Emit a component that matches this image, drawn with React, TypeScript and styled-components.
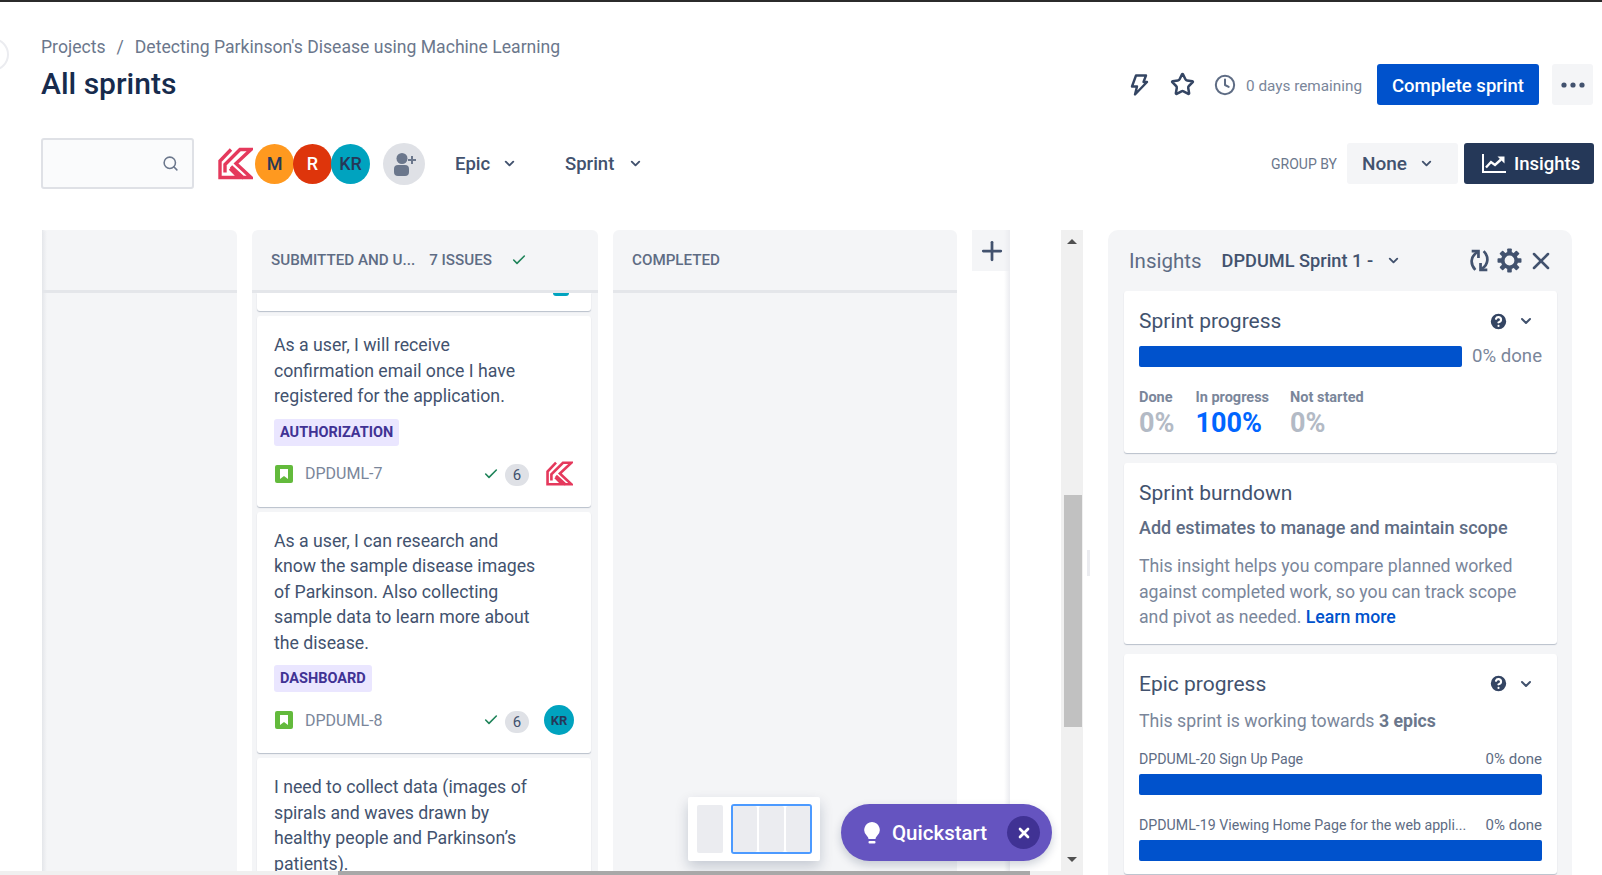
import React from 'react';
import styled, { createGlobalStyle } from 'styled-components';
import { Check, ChevronDown, CircleHelp, Clock, Plus, Search, Star, X } from 'lucide-react';

const GlobalStyle = createGlobalStyle`
  html, body { margin: 0; padding: 0; background: #fff; }
  body { font-family: Roboto, "Noto Sans", sans-serif; color: #172b4d; }
  * { box-sizing: border-box; }
  svg { flex: none; }
`;

function KLogo({ size }: { size: number }) {
  return (
    <svg width={size} height={size} viewBox="0 0 35 32" fill="none" stroke="#e5395c" strokeWidth="3.400">
      <path d="M13 2L2 13.500V30h19l-9-9" />
      <path d="M7 25v-8L22 2h11L18 16l15 14h-8L13 19" />
    </svg>
  );
}

function StoryIcon() {
  return (
    <svg width="18" height="18" viewBox="0 0 18 18">
      <rect width="18" height="18" rx="2" fill="#63ba3c" />
      <path d="M5 4h8v10l-4-3-4 3z" fill="#fff" />
    </svg>
  );
}

function BoltIcon() {
  return (
    <svg width="24" height="24" viewBox="0 0 24 24" fill="none" stroke="#344563" strokeWidth="2.400" strokeLinejoin="round">
      <path d="M9 2.500h10l-2.500 6.500H20L8 21.500l2-8H5z" />
    </svg>
  );
}

function SyncIcon() {
  return (
    <svg width="25" height="25" viewBox="0 0 24 24" fill="none" stroke="#42526e" strokeWidth="2.600">
      <path d="M10 4C3 8 3 16 8 21" />
      <path d="M4.500 3H11v6.500" />
      <path d="M14 20c7-4 7-12 2-17" />
      <path d="M19.500 21H13v-6.500" />
    </svg>
  );
}

function GearIcon() {
  const teeth = [0, 45, 90, 135, 180, 225, 270, 315];
  return (
    <svg width="25" height="25" viewBox="0 0 24 24" fill="#42526e">
      <circle cx="12" cy="12" r="6.500" fill="none" stroke="#42526e" strokeWidth="3.600" />
      {teeth.map(a => (
        <rect key={a} x="9.800" y="0.500" width="4.400" height="5" rx="0.800" transform={`rotate(${a} 12 12)`} />
      ))}
    </svg>
  );
}

function ChartIcon() {
  return (
    <svg width="26" height="22" viewBox="0 0 26 22" fill="none" stroke="#fff" strokeWidth="2">
      <path d="M2 1v18h23" />
      <path d="M5 14.500l5-5.500 4 3 6-5.500" strokeWidth="2.400" />
      <path d="M16.500 3.500h7v7z" fill="#fff" stroke="none" />
    </svg>
  );
}

function DotsIcon() {
  return (
    <svg width="24" height="6" viewBox="0 0 24 6" fill="#42526e">
      <circle cx="3" cy="3" r="2.600" />
      <circle cx="12" cy="3" r="2.600" />
      <circle cx="21" cy="3" r="2.600" />
    </svg>
  );
}

function BulbIcon() {
  return (
    <svg width="18" height="24" viewBox="0 0 18 24" fill="#fff">
      <path d="M9 1a8 8 0 0 0-5 14c1 1 1.500 2 1.500 3h7c0-1 .5-2 1.500-3A8 8 0 0 0 9 1z" />
      <rect x="5.500" y="20" width="7" height="2.500" rx="1" />
    </svg>
  );
}

function PersonAddIcon() {
  return (
    <svg width="26" height="26" viewBox="0 0 26 26" fill="#6b778c">
      <circle cx="11" cy="7.500" r="5.500" />
      <rect x="3" y="14" width="15" height="11" rx="4" />
      <path d="M20 5h2v3h3v2h-3v3h-2v-3h-3V8h3z" />
    </svg>
  );
}

function HelpChevron() {
  return (
    <HelpRow>
      <CircleHelp size={21} color="#fff" fill="#344563" strokeWidth={2.4} />
      <ChevronDown size={16} color="#42526e" strokeWidth={3} />
    </HelpRow>
  );
}

export default function App() {
  return (
    <Page>
      <GlobalStyle />
      <CollapseKnob />
      <Header>
        <HeaderLeft>
          <Crumbs>Projects<CrumbSep>/</CrumbSep>Detecting Parkinson's Disease using Machine Learning</Crumbs>
          <Title>All sprints</Title>
        </HeaderLeft>
        <HeaderRight>
          <BoltIcon />
          <Star size={25} color="#344563" strokeWidth={2.4} />
          <Clock size={22} color="#5e6c84" strokeWidth={2.2} />
          <Remaining>0 days remaining</Remaining>
          <PrimaryButton>Complete sprint</PrimaryButton>
          <MoreButton><DotsIcon /></MoreButton>
        </HeaderRight>
      </Header>

      <Toolbar>
        <SearchBox><Search size={17} color="#6b778c" strokeWidth={2.2} /></SearchBox>
        <Avatars>
          <LogoSlot><KLogo size={35} /></LogoSlot>
          <Avatar $bg="#ff991f" $fg="#253858">M</Avatar>
          <Avatar $bg="#de350b" $fg="#fff">R</Avatar>
          <Avatar $bg="#00a3bf" $fg="#253858">KR</Avatar>
        </Avatars>
        <AddPerson><PersonAddIcon /></AddPerson>
        <FilterButton $width={110} $gap={12}>Epic<ChevronDown size={15} strokeWidth={3} /></FilterButton>
        <FilterButton $width={100} $gap={14}>Sprint<ChevronDown size={15} strokeWidth={3} /></FilterButton>
        <ToolbarSpacer />
        <GroupLabel>GROUP BY</GroupLabel>
        <NoneButton>None<ChevronDown size={15} strokeWidth={3} /></NoneButton>
        <InsightsButton><ChartIcon />Insights</InsightsButton>
      </Toolbar>

      <Body>
        <Board>
          <Column $width={195}>
            <ColumnHeader />
          </Column>
          <Column $width={346}>
            <ColumnHeader>
              <HeaderName>SUBMITTED AND U...</HeaderName>
              <HeaderCount>7 ISSUES</HeaderCount>
              <Check size={16} color="#1f845a" strokeWidth={2.4} />
            </ColumnHeader>
            <CardList>
              <StubCard><StubDot /></StubCard>
              <Card>
                <CardText>As a user, I will receive confirmation email once I have registered for the application.</CardText>
                <Tag>AUTHORIZATION</Tag>
                <CardFooter>
                  <StoryIcon />
                  <IssueKey>DPDUML-7</IssueKey>
                  <Check size={16} color="#1f845a" strokeWidth={2.4} />
                  <Points>6</Points>
                  <CardAssignee><KLogo size={27} /></CardAssignee>
                </CardFooter>
              </Card>
              <Card>
                <CardText>As a user, I can research and know the sample disease images of Parkinson. Also collecting sample data to learn more about the disease.</CardText>
                <Tag>DASHBOARD</Tag>
                <CardFooter>
                  <StoryIcon />
                  <IssueKey>DPDUML-8</IssueKey>
                  <Check size={16} color="#1f845a" strokeWidth={2.4} />
                  <Points>6</Points>
                  <CardAssignee><SmallAvatar>KR</SmallAvatar></CardAssignee>
                </CardFooter>
              </Card>
              <Card>
                <CardText>I need to collect data (images of spirals and waves drawn by healthy people and Parkinson’s patients).</CardText>
              </Card>
            </CardList>
          </Column>
          <Column $width={344}>
            <ColumnHeader><HeaderName>COMPLETED</HeaderName></ColumnHeader>
          </Column>
          <AddColumn><Plus size={30} color="#42526e" strokeWidth={2.2} /></AddColumn>
        </Board>

        <VScroll>
          <ScrollArrow $up />
          <VThumb />
          <ScrollArrow />
        </VScroll>
        <ResizeGrip />

        <Panel>
          <PanelHeader>
            <PanelTitle>Insights</PanelTitle>
            <SprintSelect>DPDUML Sprint 1 -<ChevronDown size={15} strokeWidth={3} /></SprintSelect>
            <PanelTools>
              <SyncIcon />
              <GearIcon />
              <X size={28} color="#42526e" strokeWidth={2.2} />
            </PanelTools>
          </PanelHeader>

          <InsightCard>
            <CardHead>
              <CardTitle>Sprint progress</CardTitle>
              <HelpChevron />
            </CardHead>
            <ProgressRow>
              <Bar />
              <DoneText>0% done</DoneText>
            </ProgressRow>
            <Stats>
              <Stat><StatLabel>Done</StatLabel><StatValue>0%</StatValue></Stat>
              <Stat><StatLabel>In progress</StatLabel><StatValue $active>100%</StatValue></Stat>
              <Stat><StatLabel>Not started</StatLabel><StatValue>0%</StatValue></Stat>
            </Stats>
          </InsightCard>

          <InsightCard>
            <CardHead><CardTitle>Sprint burndown</CardTitle></CardHead>
            <Subhead>Add estimates to manage and maintain scope</Subhead>
            <Blurb>This insight helps you compare planned worked against completed work, so you can track scope and pivot as needed. <LearnMore>Learn more</LearnMore></Blurb>
          </InsightCard>

          <InsightCard>
            <CardHead>
              <CardTitle>Epic progress</CardTitle>
              <HelpChevron />
            </CardHead>
            <EpicIntro>This sprint is working towards <b>3 epics</b></EpicIntro>
            <EpicRow><span>DPDUML-20 Sign Up Page</span><EpicDone>0% done</EpicDone></EpicRow>
            <Bar />
            <EpicRow $gap><span>DPDUML-19 Viewing Home Page for the web appli...</span><EpicDone>0% done</EpicDone></EpicRow>
            <Bar />
          </InsightCard>
        </Panel>

        <MiniMap>
          <MiniBlock />
          <MiniSelection><MiniBlock /><MiniBlock /><MiniBlock /></MiniSelection>
        </MiniMap>
        <Quickstart>
          <BulbIcon />
          <QuickLabel>Quickstart</QuickLabel>
          <QuickClose><X size={16} color="#fff" strokeWidth={4} /></QuickClose>
        </Quickstart>
        <HScroll />
      </Body>
    </Page>
  );
}

const Page = styled.div`
  position: relative;
  width: 1602px;
  height: 875px;
  overflow: hidden;
  border-top: 2px solid #2b2b2b;
`;
const CollapseKnob = styled.div`
  position: absolute;
  left: -24px;
  top: 36px;
  width: 33px;
  height: 33px;
  border-radius: 50%;
  border: 2px solid #ebecf0;
  background: #fff;
`;
const Header = styled.header`
  display: flex;
  justify-content: space-between;
  padding: 33px 9px 0 41px;
  height: 135px;
`;
const HeaderLeft = styled.div`
  display: flex;
  flex-direction: column;
`;
const Crumbs = styled.div`
  font-size: 17.600px;
  line-height: 24px;
  color: #6b778c;
`;
const CrumbSep = styled.span`
  margin: 0 11px;
`;
const Title = styled.h1`
  margin: 5px 0 0;
  font-size: 30px;
  line-height: 40px;
  font-weight: 500;
  color: #172b4d;
`;
const HeaderRight = styled.div`
  display: flex;
  align-items: center;
  gap: 19px;
  height: 41px;
  margin-top: 29px;
`;
const Remaining = styled.span`
  font-size: 15.300px;
  padding-top: 2px;
  color: #7a869a;
  margin-left: -9px;
`;
const PrimaryButton = styled.button`
  height: 41px;
  width: 162px;
  padding: 2px 0 0;
  border: 0;
  border-radius: 3px;
  background: #0052cc;
  color: #fff;
  font: 500 18.500px Roboto, sans-serif;
  margin-left: -4px;
`;
const MoreButton = styled.div`
  width: 41px;
  height: 41px;
  border-radius: 3px;
  background: #f4f5f7;
  display: flex;
  align-items: center;
  justify-content: center;
  margin-left: -6px;
`;
const Toolbar = styled.div`
  display: flex;
  align-items: center;
  height: 53px;
  padding: 0 8px 0 41px;
`;
const SearchBox = styled.div`
  width: 153px;
  height: 51px;
  border: 2px solid #dfe1e6;
  border-radius: 3px;
  background: #fafbfc;
  display: flex;
  align-items: center;
  justify-content: flex-end;
  padding-right: 13px;
`;
const Avatars = styled.div`
  display: flex;
  align-items: center;
  margin-left: 24px;
`;
const LogoSlot = styled.div`
  width: 38px;
  display: flex;
`;
const Avatar = styled.div<{ $bg: string; $fg: string }>`
  width: 39px;
  height: 40px;
  margin-left: -1px;
  border-radius: 50%;
  background: ${p => p.$bg};
  color: ${p => p.$fg};
  font-size: 18px;
  font-weight: 500;
  display: flex;
  align-items: center;
  justify-content: center;
`;
const AddPerson = styled.div`
  width: 42px;
  height: 42px;
  margin-left: 13px;
  border-radius: 50%;
  background: #dfe1e6;
  display: flex;
  align-items: center;
  justify-content: center;
`;
const FilterButton = styled.div<{ $width: number; $gap: number }>`
  width: ${p => p.$width}px;
  padding-left: 30px;
  display: flex;
  align-items: center;
  gap: ${p => p.$gap}px;
  font-size: 18.500px;
  font-weight: 500;
  color: #42526e;
`;
const ToolbarSpacer = styled.div`
  flex: 1;
`;
const GroupLabel = styled.span`
  font-size: 14px;
  color: #6b778c;
  margin-right: 10px;
`;
const NoneButton = styled.div`
  width: 111px;
  height: 41px;
  border-radius: 3px;
  background: #f4f5f7;
  display: flex;
  align-items: center;
  gap: 12px;
  padding-left: 15px;
  font-size: 19px;
  font-weight: 500;
  color: #42526e;
`;
const InsightsButton = styled.div`
  width: 130px;
  height: 41px;
  margin-left: 6px;
  border-radius: 3px;
  background: #253858;
  color: #fff;
  display: flex;
  align-items: center;
  gap: 7px;
  padding-left: 17px;
  font-size: 18.500px;
  font-weight: 500;
`;
const Body = styled.div`
  display: flex;
  margin-top: 40px;
  height: 645px;
`;
const Board = styled.div`
  position: relative;
  display: flex;
  gap: 15px;
  padding-left: 42px;
  width: 1061px;
  height: 641px;
  overflow: hidden;

  &::before {
    content: '';
    position: absolute;
    left: 42px;
    top: 0;
    bottom: 0;
    width: 5px;
    background: linear-gradient(to right, #e4e6ea, rgba(244, 245, 247, 0));
  }
  &::after {
    content: '';
    position: absolute;
    left: 1004px;
    top: 0;
    bottom: 0;
    width: 6px;
    background: linear-gradient(to right, rgba(235, 236, 240, 0), #ebecf0);
  }
`;
const Column = styled.section<{ $width: number }>`
  width: ${p => p.$width}px;
  flex: none;
  background: #f4f5f7;
  border-radius: 6px 6px 0 0;
  display: flex;
  flex-direction: column;
`;
const ColumnHeader = styled.div`
  height: 63px;
  flex: none;
  display: flex;
  align-items: center;
  gap: 14px;
  padding: 0 18px 0 19px;
  border-bottom: 3px solid #e4e6ea;
  font-size: 15.200px;
  font-weight: 500;
  color: #5e6c84;
`;
const HeaderName = styled.span``;
const HeaderCount = styled.span`
  margin-right: 5px;
`;
const CardList = styled.div`
  display: flex;
  flex-direction: column;
  gap: 5px;
  padding: 0 7px 0 5px;
  overflow: hidden;
  flex: 1;
`;
const StubCard = styled.div`
  height: 18px;
  flex: none;
  background: #fff;
  border-radius: 0 0 3px 3px;
  box-shadow: 0 1px 1px rgba(9, 30, 66, 0.25);
  display: flex;
  justify-content: flex-end;
  padding-right: 22px;
`;
const StubDot = styled.div`
  width: 16px;
  height: 3px;
  border-radius: 0 0 8px 8px;
  background: #00a3bf;
`;
const Card = styled.article`
  flex: none;
  background: #fff;
  border-radius: 3px;
  box-shadow: 0 1px 1px rgba(9, 30, 66, 0.25);
  padding: 17px 17px 18px;
`;
const CardText = styled.p`
  margin: 0;
  width: 266px;
  font-size: 17.700px;
  line-height: 25.500px;
  color: #42526e;
`;
const Tag = styled.div`
  display: inline-flex;
  align-items: center;
  height: 27px;
  margin-top: 9px;
  padding: 0 6px;
  border-radius: 3px;
  background: #eae6ff;
  color: #403294;
  font-size: 14.500px;
  font-weight: 700;
`;
const CardFooter = styled.div`
  display: flex;
  align-items: center;
  height: 30px;
  margin-top: 13px;
  padding-left: 1px;
`;
const IssueKey = styled.span`
  margin-left: 12px;
  font-size: 16px;
  color: #7a869a;
  flex: 1;
`;
const Points = styled.span`
  width: 24px;
  height: 22px;
  margin: 3px 0 0 6px;
  border-radius: 11px;
  background: #dfe1e6;
  color: #42526e;
  font-size: 15px;
  display: flex;
  align-items: center;
  justify-content: center;
`;
const CardAssignee = styled.div`
  width: 30px;
  margin-left: 15px;
  display: flex;
  justify-content: center;
`;
const SmallAvatar = styled.div`
  width: 30px;
  height: 30px;
  border-radius: 50%;
  background: #00a3bf;
  color: #253858;
  font-size: 13px;
  font-weight: 700;
  display: flex;
  align-items: center;
  justify-content: center;
`;
const AddColumn = styled.div`
  width: 38px;
  height: 41px;
  flex: none;
  padding-left: 2px;
  background: #f4f5f7;
  display: flex;
  align-items: center;
  justify-content: center;
`;
const VScroll = styled.div`
  position: relative;
  width: 22px;
  height: 641px;
  flex: none;
  background: #f0f0f0;
`;
const ScrollArrow = styled.div<{ $up?: boolean }>`
  position: absolute;
  left: 6px;
  ${p => (p.$up ? 'top: 9px;' : 'bottom: 9px;')}
  width: 0;
  height: 0;
  border-left: 5px solid transparent;
  border-right: 5px solid transparent;
  ${p => (p.$up ? 'border-bottom: 5px solid #505050;' : 'border-top: 5px solid #505050;')}
`;
const VThumb = styled.div`
  position: absolute;
  left: 3px;
  right: 1px;
  top: 265px;
  height: 232px;
  background: #c1c1c1;
`;
const ResizeGrip = styled.div`
  position: absolute;
  left: 1087px;
  top: 548px;
  width: 3px;
  height: 26px;
  background: #ebecf0;
`;
const Panel = styled.aside`
  width: 464px;
  margin-left: 25px;
  flex: none;
  height: 645px;
  padding: 0 15px 0 16px;
  background: #f4f5f7;
  border-radius: 10px 10px 0 0;
  overflow: hidden;
  display: flex;
  flex-direction: column;
  gap: 10px;
`;
const PanelHeader = styled.div`
  height: 51px;
  display: flex;
  align-items: center;
  padding: 10px 0 0 5px;
  color: #42526e;
  flex: none;
`;
const PanelTitle = styled.span`
  font-size: 20.500px;
  color: #5e6c84;
`;
const SprintSelect = styled.span`
  display: flex;
  align-items: center;
  gap: 13px;
  margin-left: 20px;
  font-size: 18.200px;
  font-weight: 500;
`;
const PanelTools = styled.div`
  margin-left: auto;
  display: flex;
  align-items: center;
  gap: 5px;
  margin-right: 2px;
`;
const InsightCard = styled.div`
  flex: none;
  padding: 14px 15px 13px;
  background: #fff;
  border-radius: 3px;
  box-shadow: 0 1px 1px rgba(9, 30, 66, 0.25);
`;
const CardHead = styled.div`
  display: flex;
  justify-content: space-between;
  align-items: center;
  height: 32px;
`;
const CardTitle = styled.h2`
  margin: 0;
  font-size: 21px;
  font-weight: 400;
  color: #42526e;
`;
const HelpRow = styled.div`
  display: flex;
  align-items: center;
  gap: 9px;
  margin-right: 8px;
`;
const ProgressRow = styled.div`
  display: flex;
  align-items: center;
  gap: 10px;
  margin-top: 8px;
`;
const Bar = styled.div`
  height: 21px;
  flex: 1;
  background: #0052cc;
  border-radius: 2px;
`;
const DoneText = styled.span`
  font-size: 18.600px;
  color: #7a869a;
`;
const Stats = styled.div`
  display: flex;
  gap: 21px;
  margin-top: 22px;
  padding-bottom: 1px;
`;
const Stat = styled.div`
  display: flex;
  flex-direction: column;
`;
const StatLabel = styled.span`
  font-size: 14.500px;
  font-weight: 700;
  line-height: 18px;
  color: #7a869a;
`;
const StatValue = styled.span<{ $active?: boolean }>`
  font-size: 27px;
  font-weight: 700;
  line-height: 32px;
  color: ${p => (p.$active ? '#0065ff' : '#b3bac5')};
`;
const Subhead = styled.div`
  margin-top: 6px;
  font-size: 18px;
  font-weight: 500;
  line-height: 25px;
  color: #5e6c84;
`;
const Blurb = styled.p`
  margin: 14px 0 0;
  font-size: 17.700px;
  line-height: 25.500px;
  color: #7a869a;
`;
const LearnMore = styled.a`
  color: #0052cc;
  font-weight: 500;
`;
const EpicIntro = styled.div`
  margin-top: 8px;
  font-size: 17.700px;
  line-height: 26px;
  color: #7a869a;
  b { color: #6b778c; }
`;
const EpicRow = styled.div<{ $gap?: boolean }>`
  display: flex;
  justify-content: space-between;
  white-space: nowrap;
  margin-top: ${p => (p.$gap ? '20px' : '15px')};
  margin-bottom: 5px;
  font-size: 14.200px;
  line-height: 20px;
  color: #5e6c84;
`;
const EpicDone = styled.span`
  font-size: 15px;
`;
const MiniMap = styled.div`
  position: absolute;
  left: 688px;
  top: 795px;
  width: 132px;
  height: 64px;
  padding: 8px 8px 8px 9px;
  display: flex;
  gap: 8px;
  background: #fff;
  box-shadow: 0 6px 14px rgba(9, 30, 66, 0.2);
  border-radius: 2px;
`;
const MiniBlock = styled.div`
  flex: 1;
  background: #ebecf0;
  border-radius: 2px;
`;
const MiniSelection = styled.div`
  flex: none;
  width: 81px;
  height: 50px;
  margin: -1px 0;
  display: flex;
  gap: 2px;
  border: 2px solid #4c9aff;
  border-radius: 3px;
`;
const Quickstart = styled.div`
  position: absolute;
  left: 841px;
  top: 802px;
  width: 211px;
  height: 57px;
  border-radius: 29px;
  background: #6554c0;
  display: flex;
  align-items: center;
  padding: 0 12px 0 22px;
  gap: 11px;
  box-shadow: 0 4px 10px rgba(9, 30, 66, 0.2);
`;
const QuickLabel = styled.span`
  flex: 1;
  color: #fff;
  font-size: 20.500px;
  font-weight: 500;
`;
const QuickClose = styled.div`
  width: 33px;
  height: 33px;
  border-radius: 50%;
  background: #403294;
  display: flex;
  align-items: center;
  justify-content: center;
`;
const HScroll = styled.div`
  position: absolute;
  left: 0;
  bottom: 0;
  width: 1083px;
  height: 4px;
  background: linear-gradient(to right, #f0f0f0 338px, #a8a8a8 338px, #a8a8a8 1030px, #f0f0f0 1030px);
`;
